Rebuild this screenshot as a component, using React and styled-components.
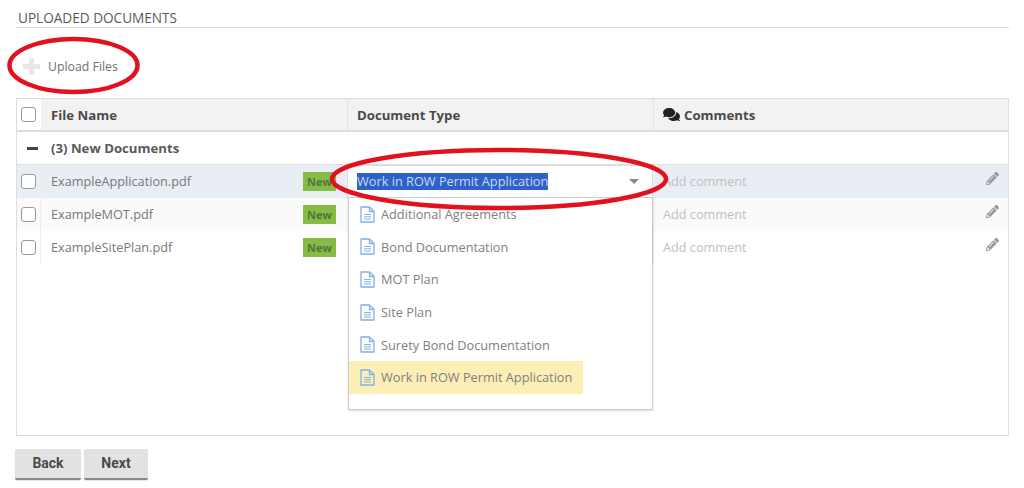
import React from 'react';
import styled, { createGlobalStyle } from 'styled-components';
import { FaComments, FaPencilAlt } from 'react-icons/fa';

const GlobalStyle = createGlobalStyle`
  html, body { margin: 0; padding: 0; background: #fff; }
  body { font-family: "Open Sans", "Liberation Sans", sans-serif; color: #555; }
  * { box-sizing: border-box; }
`;

const Page = styled.div`
  position: relative;
  width: 1024px;
  height: 488px;
  overflow: hidden;
  padding: 10px 15px 0 16px;
`;

const SectionTitle = styled.div`
  height: 18px;
  padding-left: 2px;
  font-size: 13.6px;
  line-height: 15px;
  font-weight: 400;
  color: #5a5a5a;
  border-bottom: 1px solid #ddd;
  white-space: nowrap;
`;

const UploadRow = styled.div`
  display: flex;
  align-items: center;
  gap: 8px;
  height: 70px;
  padding: 6px 0 0 7px;
  font-size: 12.3px;
  color: #707070;
`;

const PlusIcon = () => (
  <svg width="17" height="17" viewBox="0 0 17 17">
    <path d="M6 0h5v6h6v5h-6v6H6v-6H0V6h6z" fill="#e8e8e8" />
  </svg>
);

const Table = styled.div`
  position: relative;
  height: 338px;
  border: 1px solid #ddd;
  border-top: none;
`;

const HeaderRow = styled.div`
  display: grid;
  grid-template-columns: 24px 306px 306px 1fr;
  height: 34px;
  border-top: 1px solid #ddd;
  border-bottom: 2px solid #ddd;
  background: #fff;
`;

const HeaderCell = styled.div`
  display: flex;
  align-items: center;
  gap: 4px;
  padding-left: ${(p) => (p.$divider ? 9 : 10)}px;
  font-size: 13.2px;
  font-weight: 700;
  color: #4a4a4a;
  background: #f2f2f2;
  border-left: ${(p) => (p.$divider ? '1px solid #e2e2e2' : 'none')};
  svg { color: #222; font-size: 17px; }
`;

const CheckCell = styled.div`
  display: flex;
  align-items: center;
  justify-content: center;
  padding-right: 1px;
`;

const CheckBox = styled.span`
  display: block;
  width: 15px;
  height: 15px;
  background: #fff;
  border: 1.5px solid #999;
  border-radius: 3px;
`;

const GroupRow = styled.div`
  display: flex;
  align-items: center;
  height: 33px;
  border-bottom: 1px solid #ddd;
  font-size: 13.2px;
  font-weight: 700;
  color: #5a5a5a;
`;

const Collapse = styled.span`
  display: block;
  width: 11px;
  height: 3px;
  margin: 0 13px 0 10px;
  background: #444;
`;

const Row = styled.div`
  display: grid;
  grid-template-columns: 24px 306px 306px 1fr;
  height: 33px;
  background: ${(p) => p.$bg};
`;

const RowCheck = styled(CheckCell)`
  border-right: 1px solid #eee;
`;

const FileCell = styled.div`
  display: flex;
  align-items: center;
  justify-content: space-between;
  padding: 0 11px 0 10px;
  font-size: 12.7px;
  line-height: 16px;
  color: #777;
`;

const FileName = styled.span`
  margin-bottom: 1px;
`;

const NewBadge = styled.span`
  display: flex;
  align-items: center;
  justify-content: center;
  width: 33px;
  height: 19px;
  background: #86bb45;
  color: #55743a;
  font-size: 11px;
  font-weight: 700;
`;

const TypeCell = styled.div`
  display: flex;
  align-items: center;
  padding: 0 11px 1px 9px;
  font-size: 12.75px;
  background: ${(p) => (p.$open ? '#fff' : 'transparent')};
  border-top: ${(p) => (p.$open ? '1px solid #ddd' : 'none')};
  border-left: ${(p) => (p.$open ? '1px solid #ddd' : 'none')};
  border-right: ${(p) => (p.$open ? '1px solid #ddd' : 'none')};
`;

const SelectedText = styled.span`
  background: #2f62c9;
  color: #c9d8f2;
  line-height: 17px;
  white-space: nowrap;
`;

const Caret = styled.span`
  width: 0;
  height: 0;
  margin-left: auto;
  margin-right: 2px;
  border-left: 5px solid transparent;
  border-right: 5px solid transparent;
  border-top: 5px solid #888;
`;

const CommentCell = styled.div`
  display: flex;
  align-items: center;
  justify-content: space-between;
  padding: 0 9px 1px;
  font-size: 12.7px;
  color: #c0c0c0;
  border-left: 1px solid #eee;
  svg { color: #999; font-size: 13px; margin-top: -6px; }
`;

const Dropdown = styled.ul`
  position: absolute;
  left: 331px;
  top: 99px;
  width: 305px;
  height: 213px;
  margin: 0;
  padding: 0;
  list-style: none;
  background: #fff;
  border: 1px solid #ccc;
  box-shadow: 0 1px 2px rgba(0, 0, 0, 0.15);
`;

const DropdownItem = styled.li`
  display: flex;
  align-items: center;
  gap: 6px;
  width: fit-content;
  height: 32.6px;
  padding: 0 11px 0 11px;
  font-size: 12.75px;
  color: #808080;
  background: ${(p) => (p.$active ? '#fdeeb5' : 'transparent')};
`;

const DocIcon = () => (
  <svg width="15" height="17" viewBox="0 0 15 17" fill="none" stroke="#7fb0ec" strokeWidth="1.3">
    <path d="M1 1h8.5L14 5.5V16H1z" strokeLinejoin="round" />
    <path d="M9.5 1v4.5H14" />
    <path d="M4 8.5h7M4 10.8h7M4 13h7" strokeWidth="1" />
  </svg>
);

const Buttons = styled.div`
  display: flex;
  gap: 3px;
  padding: 13px 0 0 0;
  margin-left: -1px;
`;

const Button = styled.button`
  width: ${(p) => p.$w}px;
  height: 31px;
  padding: 0 0 2px;
  border: none;
  border-bottom: 2px solid #888;
  border-radius: 2px;
  background: #e2e2e2;
  color: #4a4a4a;
  font-family: Roboto, "Open Sans", sans-serif;
  font-size: 14px;
  font-weight: 700;
  box-shadow: 0 1px 1px rgba(0, 0, 0, 0.1);
`;

const Mark = styled.svg`
  position: absolute;
  left: ${(p) => p.$x}px;
  top: ${(p) => p.$y}px;
  overflow: visible;
`;

const rows = [
  { name: 'ExampleApplication.pdf', bg: '#e9eef5', open: true },
  { name: 'ExampleMOT.pdf', bg: '#fafafa' },
  { name: 'ExampleSitePlan.pdf', bg: '#fff' },
];

const docTypes = [
  'Additional Agreements',
  'Bond Documentation',
  'MOT Plan',
  'Site Plan',
  'Surety Bond Documentation',
  'Work in ROW Permit Application',
];

const App = () => (
  <Page>
    <GlobalStyle />
    <SectionTitle>UPLOADED DOCUMENTS</SectionTitle>
    <UploadRow>
      <PlusIcon />
      Upload Files
    </UploadRow>
    <Table>
      <HeaderRow>
        <CheckCell><CheckBox /></CheckCell>
        <HeaderCell>File Name</HeaderCell>
        <HeaderCell $divider>Document Type</HeaderCell>
        <HeaderCell $divider><FaComments />Comments</HeaderCell>
      </HeaderRow>
      <GroupRow><Collapse />(3) New Documents</GroupRow>
      {rows.map((row) => (
        <Row key={row.name} $bg={row.bg}>
          <RowCheck><CheckBox /></RowCheck>
          <FileCell><FileName>{row.name}</FileName><NewBadge>New</NewBadge></FileCell>
          <TypeCell $open={row.open}>
            {row.open && <SelectedText>Work in ROW Permit Application</SelectedText>}
            {row.open && <Caret />}
          </TypeCell>
          <CommentCell>Add comment<FaPencilAlt /></CommentCell>
        </Row>
      ))}
      <Dropdown>
        {docTypes.map((type, i) => (
          <DropdownItem key={type} $active={i === docTypes.length - 1}>
            <DocIcon />
            {type}
          </DropdownItem>
        ))}
      </Dropdown>
    </Table>
    <Buttons>
      <Button $w={66}>Back</Button>
      <Button $w={64}>Next</Button>
    </Buttons>
    <Mark $x={8} $y={38} width="132" height="55" viewBox="0 0 132 55">
      <ellipse cx="65.5" cy="27.5" rx="64" ry="26.5" fill="none" stroke="#e3101f" strokeWidth="4.5" />
    </Mark>
    <Mark $x={330} $y={148} width="340" height="62" viewBox="0 0 340 62">
      <ellipse cx="169" cy="31" rx="167" ry="29" fill="none" stroke="#e3101f" strokeWidth="4.5" />
    </Mark>
  </Page>
);

export default App;
